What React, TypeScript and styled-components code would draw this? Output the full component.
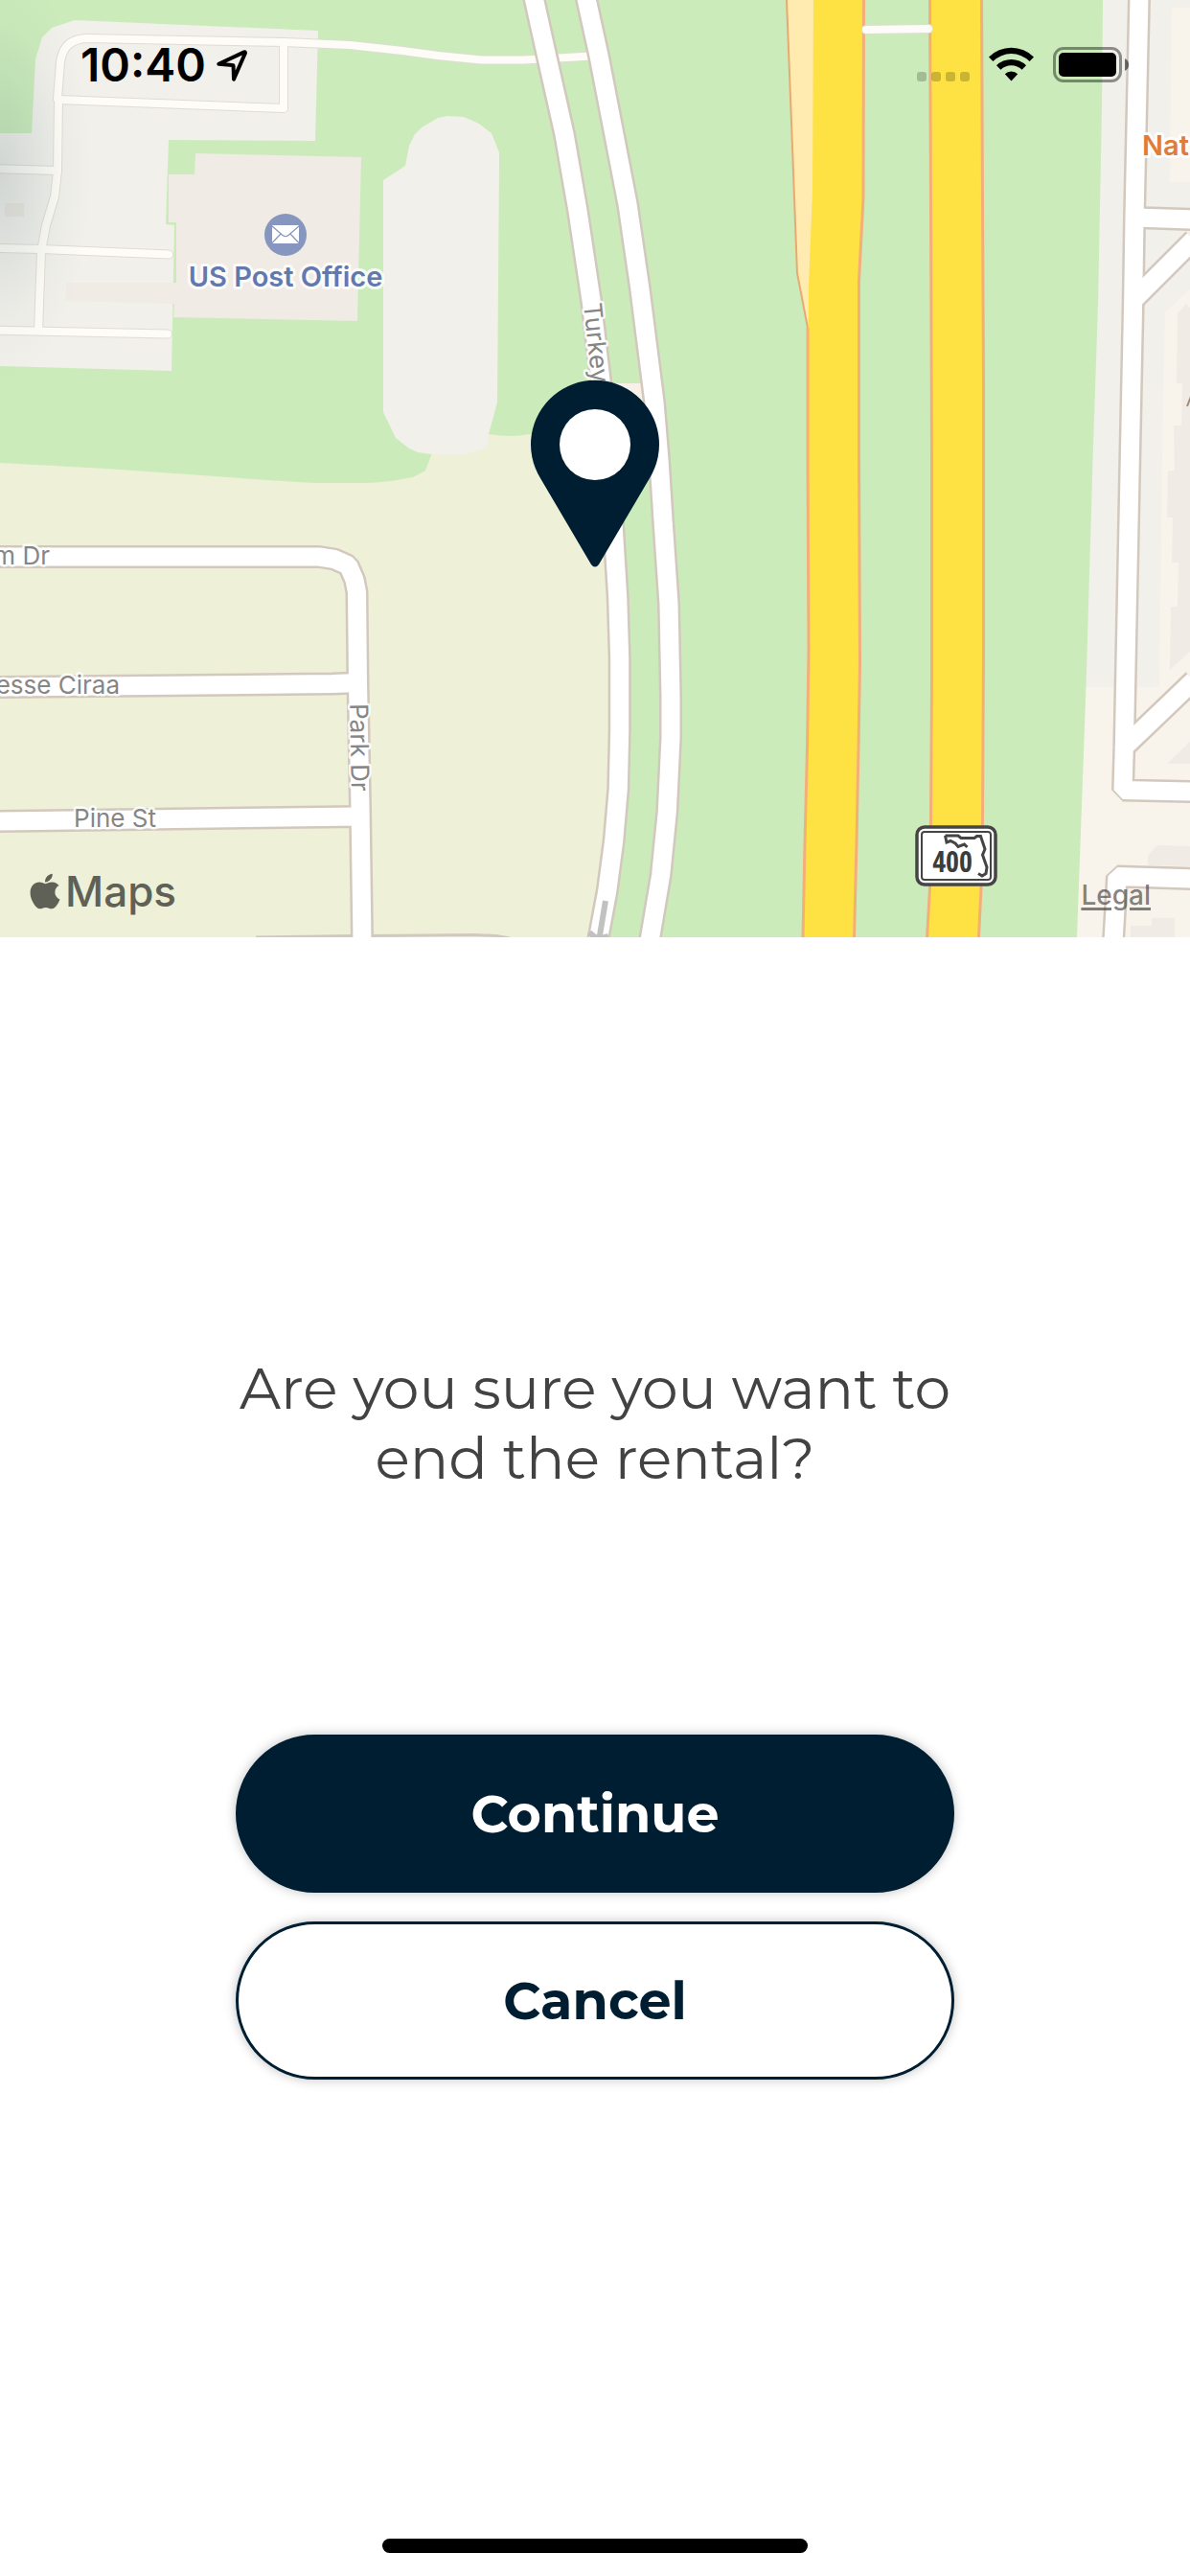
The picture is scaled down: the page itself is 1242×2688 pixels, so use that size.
import React from "react";
import styled, { createGlobalStyle, css } from "styled-components";
import { FaApple } from "react-icons/fa";

const navy = "#001e32";

const GlobalStyle = createGlobalStyle`
  *, *::before, *::after { box-sizing: border-box; }
  body {
    margin: 0;
    background: #fff;
    font-family: Inter, Roboto, "Liberation Sans", sans-serif;
  }
`;

const Screen = styled.div`
  display: flex;
  flex-direction: column;
  min-height: 100vh;
  background: #fff;
`;

const MapPanel = styled.section`
  position: relative;
  width: 100%;
  aspect-ratio: 1242 / 978;
  overflow: hidden;
`;

const MapCanvas = styled.svg`
  display: block;
  width: 100%;
  height: 100%;
`;

const Casing = styled.g`
  fill: none;
  stroke: #d3c8bd;
  stroke-width: 24px;
  stroke-linejoin: bevel;
`;

const Street = styled.g`
  fill: none;
  stroke: #fff;
  stroke-width: 19px;
  stroke-linejoin: bevel;
`;

const LaneCasing = styled.g`
  fill: none;
  stroke: #dfdcd4;
  stroke-width: 10px;
  stroke-linecap: round;
  stroke-linejoin: round;
`;

const Lane = styled.g`
  fill: none;
  stroke: #fefcf6;
  stroke-width: 8px;
  stroke-linecap: round;
  stroke-linejoin: round;
`;

const StreetLabel = styled.text`
  fill: #868686;
  stroke: rgba(255, 255, 255, 0.85);
  stroke-width: 5px;
  stroke-linejoin: round;
  paint-order: stroke;
  font-size: 26px;
`;

const PlaceLabel = styled.text<{ $color: string }>`
  fill: ${(p) => p.$color};
  stroke: rgba(255, 255, 255, 0.85);
  stroke-width: 6px;
  stroke-linejoin: round;
  paint-order: stroke;
  font-size: 29px;
  font-weight: 600;
`;

const ShieldNumber = styled.text`
  fill: #3c3c3c;
  font-family: "Liberation Sans Narrow", "Open Sans Condensed", Roboto, sans-serif;
  font-size: 30px;
  font-weight: 700;
  text-anchor: middle;
`;

const StatusBar = styled.header`
  position: absolute;
  top: 0;
  left: 0;
  right: 0;
  height: 86px;
  padding: 0 64px 0 84px;
  display: flex;
  justify-content: space-between;
  align-items: flex-end;
  color: #000;
`;

const StatusGroup = styled.div<{ $gap: number }>`
  display: flex;
  align-items: flex-end;
  gap: ${(p) => p.$gap}px;
`;

const Clock = styled.time`
  font-size: 48px;
  line-height: 36px;
  font-weight: 600;
`;

const StatusIcon = styled.svg`
  display: block;
  overflow: visible;
`;

const MapFooter = styled.footer`
  position: absolute;
  left: 0;
  right: 0;
  bottom: 18px;
  padding: 0 41px 0 26px;
  display: flex;
  justify-content: space-between;
  align-items: flex-end;
`;

const MapsBrand = styled.div`
  display: flex;
  align-items: center;
  color: #606156;
  font-size: 44px;
  line-height: 60px;
  font-weight: 500;
`;

const LegalLink = styled.a`
  color: rgba(60, 60, 60, 0.65);
  font-size: 28px;
  line-height: 52px;
  font-weight: 500;
  text-decoration: underline;
  text-decoration-thickness: 3px;
  text-underline-offset: 3px;
`;

const Dialog = styled.main`
  flex: 1;
  display: flex;
  flex-direction: column;
  align-items: center;
  padding: 434px 48px 80px;
`;

const Question = styled.h1`
  width: 100%;
  max-width: 750px;
  margin: 0 0 252px;
  color: #424242;
  font-family: Montserrat, Inter, "Open Sans", sans-serif;
  font-size: 60px;
  line-height: 73px;
  font-weight: 400;
  text-align: center;
`;

const Actions = styled.div`
  display: flex;
  flex-direction: column;
  gap: 30px;
  width: 100%;
  max-width: 750px;
`;

const ActionButton = styled.button<{ $primary?: boolean }>`
  height: 165px;
  border: 3px solid ${navy};
  border-radius: 83px;
  box-shadow: 0 0 12px rgba(0, 0, 0, 0.25);
  font-family: Montserrat, Inter, "Open Sans", sans-serif;
  font-size: 54px;
  line-height: 68px;
  font-weight: 700;
  cursor: pointer;
  ${(p) =>
    p.$primary
      ? css`
          background: ${navy};
          color: #fff;
        `
      : css`
          background: #fff;
          color: ${navy};
        `}
`;

const HomeIndicator = styled.div`
  align-self: center;
  width: 444px;
  height: 15px;
  margin-bottom: 24px;
  border-radius: 8px;
  background: #000;
`;

const lanes = [
  "M60 103 L63 65 Q66 41 90 40 L297 44 L365 47 L420 53 L457 58 L502 62.5 L547 62.5 L617 58.5",
  "M296 45 L296 113 L61 104",
  "M61 103 L60 178 L57 205 L48 235 L43 262 L40 345",
  "M-6 176 L60 178",
  "M-6 259 L43 260 L176 265.5",
  "M-6 344.5 L175 348.5",
  "M904 31 L969 30",
];

const streets = [
  "M557 -3 L571 60 L589 140 L603 220 L617 313 L627 397 L634 470 L640 547 L644.7 623 L646.7 687 L646.7 763 L645.3 823 L640.7 877 L633.7 930 L624 982",
  "M611.6 -3 L625 58 L655 213 L667.7 300 L683 420 L688 480 L692.3 547 L698 630 L700 727 L700 770 L696.3 847 L689.7 913 L678 982",
  "M-5 581 L333 581 L349 583.5 L363.5 590 L370 605 L372.5 618 L373.5 713 L376 843 L378 982",
  "M-5 717 L347 713.5 L373 712.5",
  "M-5 857 L376 852",
  "M1189 -3 L1184 227 L1182.7 313 L1179.3 480 L1173.3 780 L1172 824.5 L1246 826",
  "M1184 227 L1246 229",
  "M1183 313 L1246 250",
  "M1174 779 L1246 710",
  "M1162 982 L1166 914.5 L1246 917",
];

const LocationIcon = () => (
  <StatusIcon width="32" height="34" viewBox="0 0 32 34" aria-hidden="true">
    <path
      d="M2.3 14.8 L28.8 2.4 Q30.4 2 29.8 3.8 L18 30.6 L17.6 17.2 Q17.6 16 16.4 16 Z"
      fill="none"
      stroke="#000"
      strokeWidth="4"
      strokeLinejoin="round"
    />
  </StatusIcon>
);

const CellularDots = () => (
  <StatusIcon width="55" height="11" viewBox="0 0 55 11" aria-hidden="true">
    {[0, 15, 30, 45].map((x) => (
      <rect key={x} x={x} width="10" height="10" rx="3" fill="#000" opacity="0.2" />
    ))}
  </StatusIcon>
);

const WifiIcon = () => (
  <StatusIcon width="47" height="37" viewBox="0 0 47 37" aria-hidden="true">
    <path d="M0 10.4 A33.5 33.5 0 0 1 47 10.4 L42.6 15 A27 27 0 0 0 4.4 15 Z" />
    <path d="M8 19.3 A22 22 0 0 1 39 19.3 L34.6 23.8 A15.6 15.6 0 0 0 12.4 23.8 Z" />
    <path d="M16.8 28.3 A9.6 9.6 0 0 1 30.2 28.3 L23.5 35.6 Z" />
  </StatusIcon>
);

const BatteryIcon = () => (
  <StatusIcon width="79" height="37" viewBox="0 0 79 37" aria-hidden="true">
    <rect x="1.5" y="1.5" width="69" height="34" rx="9.5" fill="none" stroke="#000" strokeOpacity="0.42" strokeWidth="3" />
    <rect x="6" y="6" width="60" height="25" rx="5" fill="#000" />
    <path d="M75 12 Q79 14 79 18.5 Q79 23 75 25 Z" fill="#000" fillOpacity="0.55" />
  </StatusIcon>
);

const RouteShield = () => (
  <g>
    <rect x="957" y="863" width="82" height="60" rx="8" fill="#fff" stroke="#454545" strokeWidth="3.5" />
    <rect x="962" y="868" width="72" height="50" rx="3" fill="none" stroke="#454545" strokeWidth="2" />
    <path
      d="M986.5 872 L1000 872 L1003 874.5 L1017 874.5 L1019.5 872.5 L1023.5 872.5 L1028 886 L1025.5 892 L1030 905 L1029 911.5 L1025 914 L1021 911.5 M986.5 872 L988 879 L992 877.5 L997 880 L1000 883.5 L1006.500 881 L1009.500 884"
      fill="none"
      stroke="#454545"
      strokeWidth="3"
    />
    <ShieldNumber x="994" y="910">400</ShieldNumber>
  </g>
);

const LocalMap = () => (
  <MapCanvas viewBox="0 0 1242 978" preserveAspectRatio="xMidYMid slice" role="img" aria-label="Map of the rental location">
    <defs>
      <radialGradient id="edgeShade">
        <stop offset="0" stopColor="#506e78" stopOpacity="0.2" />
        <stop offset="0.35" stopColor="#506e78" stopOpacity="0.12" />
        <stop offset="0.7" stopColor="#506e78" stopOpacity="0.03" />
        <stop offset="1" stopColor="#506e78" stopOpacity="0" />
      </radialGradient>
    </defs>

    <rect width="1242" height="978" fill="#cbebbb" />
    <path d="M0 483 L111 489 L225 497 Q290 502 330 504 L380 504 Q405 503 419 500 L431 498 L444 491 L452 470 L510 453 Q535 457 552 453 L632 450 L640 547 L646 687 L646 763 L640 877 L624 978 L0 978 Z" fill="#eef0d8" />
    <path d="M640 400 H669 L674 450 H640 Z" fill="#f7f1e8" />

    <path d="M0 139 L33 139 L37 62 L44 39 L54 29 L78 21 L332 32 L329 147 L176 146 L173 234 L182 235 L179 387 L0 382 Z" fill="#f1f0ea" />
    <path d="M400 188 L423 173 L427 152 L433 140 L440 133 L457 123 L467 121 L484 122 L500 129 L513 139 L521 159 L521 175 L519 420 L510 453 L508 467 L483 475 L450 474 L436 472 L427 468 L413 457 L400 430 Z" fill="#f1f0ea" />
    <path d="M204 160 L377 164 L373 335 L181 331 L182 317 L69 314 L69 295 L184 295 L184 232 L176 232 L176 182 L203 182 Z" fill="#f0ebe4" />
    <rect x="5" y="212" width="20" height="14" fill="#ece8e0" />

    <path d="M1151 0 L1150 113 L1146 317 L1140.500 480 L1133.500 717 H1242 V0 Z" fill="#f1f0ea" />
    <path d="M1133.500 717 L1124 978 H1242 V717 Z" fill="#f9f4eb" />
    <path d="M1223 8 H1242 V190 H1221 Z M1242 302 L1216 325 L1213 480 L1210 718 H1242 Z" fill="#f9f4eb" />
    <path
      d="M1242 321 L1238 317 L1229 327 L1228 400 L1234 400 L1233 444 L1225 444 L1226 491 L1219 491 L1218 540 L1224 540 L1223 587 L1230 587 L1229 633 L1222 633 L1221 699 L1242 680 Z M1218 797 L1242 774 V797 Z M1198 903 V893 L1208 882 L1242 883 V904 Z M1180 978 V966 H1202 V958 H1226 V978 Z"
      fill="#f0ebe4"
    />
    <path d="M1239 424 L1244 411" stroke="#a08c7c" strokeWidth="2" />

    <path d="M821 0 L827 153 L832 285 L843 342 L852 345 V0 Z" fill="#ffeab0" />
    <path d="M821 0 L827 153 L832 285 L843 342" fill="none" stroke="#e8aa70" strokeWidth="2" />
    <path d="M849 0 L848 200 L844 300 L843 480 L844 680 L842.500 780 L840 880 L838 978 L891.500 978 L894 880 L896 780 L897.500 693 L896.500 480 L896.500 293 L901 207 L901.500 0 Z" fill="#fee142" />
    <path d="M970.500 0 L971.500 217 L972.500 480 L972.500 713 L971.500 857 L970.500 927 L967.500 978 L1021.500 978 L1024 927 L1025.500 857 L1026.500 680 L1026.500 400 L1025.500 213 L1024.500 0 Z" fill="#fee142" />
    <g fill="none" stroke="#f4af79" strokeWidth="3">
      <path d="M843 342 L843 480 L844 680 L842.500 780 L840 880 L838 978" />
      <path d="M901.500 0 L901 207 L896.500 293 L896.500 480 L897.500 693 L896 780 L894 880 L891.500 978" />
      <path d="M970.500 0 L971.500 217 L972.500 480 L972.500 713 L971.500 857 L970.500 927 L967.500 978" />
      <path d="M1024.500 0 L1025.500 213 L1026.500 400 L1026.500 680 L1025.500 857 L1024 927 L1021.500 978" />
    </g>

    <LaneCasing>{lanes.map((d) => <path key={d} d={d} />)}</LaneCasing>
    <Lane>{lanes.map((d) => <path key={d} d={d} />)}</Lane>
    <path d="M267 978 L367 976.500 M387 976.500 L495 975.500 L518 976.500 L532 979" fill="none" stroke="#d3c8bd" strokeWidth="3" />
    <Casing>{streets.map((d) => <path key={d} d={d} />)}</Casing>
    <Street>{streets.map((d) => <path key={d} d={d} />)}</Street>
    <path d="M632 940 L625 982 M615 973 L624 980 L635 977" fill="none" stroke="#c1c1c1" strokeWidth="6" />

    <ellipse cx="0" cy="180" rx="95" ry="220" fill="url(#edgeShade)" />

    <StreetLabel x="52" y="589" textAnchor="end">m Dr</StreetLabel>
    <StreetLabel x="125" y="724" textAnchor="end">esse Ciraa</StreetLabel>
    <StreetLabel x="120" y="863" textAnchor="middle">Pine St</StreetLabel>
    <StreetLabel transform="translate(366 780) rotate(89)" textAnchor="middle">Park Dr</StreetLabel>
    <StreetLabel transform="translate(609 317) rotate(84)">Turkey</StreetLabel>

    <circle cx="298" cy="245" r="22" fill="#8696be" />
    <rect x="284" y="235" width="28" height="19" rx="1" fill="#fff" />
    <path d="M284 236 L295 245.500 Q298 248 301 245.500 L312 236 M284 253.500 L293 244 M312 253.500 L303 244" fill="none" stroke="#8696be" strokeWidth="1.200" />
    <PlaceLabel $color="#6279b0" x="298" y="299" textAnchor="middle">US Post Office</PlaceLabel>
    <PlaceLabel $color="#e07c38" x="1192" y="162">Nat</PlaceLabel>

    <RouteShield />

    <path d="M617 589 L564 499 A67 67 0 1 1 678 499 L625 589 Q621 594 617 589 Z" fill={navy} />
    <circle cx="621" cy="464" r="37" fill="#fff" />
  </MapCanvas>
);

export default function App() {
  return (
    <Screen>
      <GlobalStyle />
      <MapPanel>
        <LocalMap />
        <StatusBar>
          <StatusGroup $gap={11}>
            <Clock>10:40</Clock>
            <LocationIcon />
          </StatusGroup>
          <StatusGroup $gap={20}>
            <CellularDots />
            <WifiIcon />
            <BatteryIcon />
          </StatusGroup>
        </StatusBar>
        <MapFooter>
          <MapsBrand>
            <FaApple size={42} aria-hidden="true" />
            Maps
          </MapsBrand>
          <LegalLink href="#legal">Legal</LegalLink>
        </MapFooter>
      </MapPanel>
      <Dialog>
        <Question>Are you sure you want to end the rental?</Question>
        <Actions>
          <ActionButton type="button" $primary>
            Continue
          </ActionButton>
          <ActionButton type="button">Cancel</ActionButton>
        </Actions>
      </Dialog>
      <HomeIndicator />
    </Screen>
  );
}
